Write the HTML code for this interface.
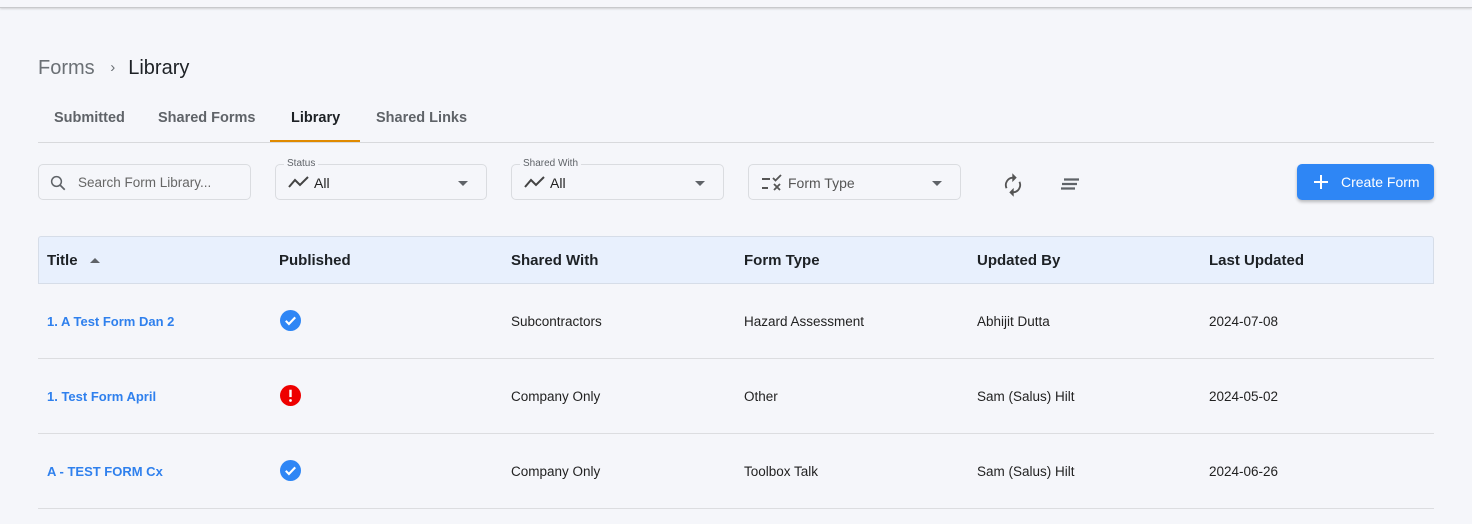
<!DOCTYPE html>
<html><head><meta charset="utf-8"><style>
*{box-sizing:border-box;margin:0;padding:0}
body{width:1472px;height:524px;overflow:hidden;background:#f5f6fa;font-family:"Liberation Sans",sans-serif;position:relative;color:#1f2328}
.top{position:absolute;left:0;top:0;width:1472px;height:8px;background:#f5f6fa;border-bottom:1px solid #c8c9cc;box-shadow:0 1px 2px rgba(0,0,0,.15)}
.abs{position:absolute}
.crumb{left:38px;top:57px;font-size:20px;color:#6b7075}
.crumb b{font-weight:normal;color:#1d2125}
.tab{top:110px;font-size:14.5px;color:#5f6368;font-weight:bold}
.field{position:absolute;top:164px;height:36px;border:1px solid #dadce0;border-radius:5px;background:#f5f6fa}
.lbl{position:absolute;top:-7px;left:8px;font-size:10px;color:#5f6368;background:#f5f6fa;padding:0 3px}
.val{position:absolute;left:38px;top:10px;font-size:14px;color:#222}
.caret{position:absolute;right:18px;top:16px;width:0;height:0;border-left:5px solid transparent;border-right:5px solid transparent;border-top:5px solid #5f6368}
.th{position:absolute;top:252px;font-size:15px;font-weight:bold;color:#1d2125}
.td{position:absolute;font-size:13.5px;color:#222}
.link{color:#2f80ed;font-weight:bold;font-size:13px}
.row{position:absolute;left:38px;width:1396px;height:1px;background:#dcdde0}
</style></head><body>
<div class="top"></div>
<div class="abs crumb">Forms <span style="font-size:15px;margin:0 13px 0 10px;position:relative;top:-2px">&#8250;</span><b>Library</b></div>
<div class="abs tab" style="left:54px">Submitted</div>
<div class="abs tab" style="left:158px">Shared Forms</div>
<div class="abs tab" style="left:291px;color:#1d2125">Library</div>
<div class="abs tab" style="left:376px">Shared Links</div>
<div class="abs" style="left:38px;top:142px;width:1396px;height:1px;background:#d8d9dc"></div>
<div class="abs" style="left:270px;top:140px;width:90px;height:2px;background:#e08a00"></div>

<div class="field" style="left:38px;width:213px">
<svg class="abs" style="left:10px;top:9px" width="18" height="18" viewBox="0 0 24 24"><circle cx="10" cy="10" r="6.5" fill="none" stroke="#5f6368" stroke-width="2"/><path d="M15 15l6 6" stroke="#5f6368" stroke-width="2.2"/></svg>
<div class="val" style="color:#666;font-size:13.5px;left:39px">Search Form Library...</div></div>
<div class="field" style="left:275px;width:212px"><div class="lbl">Status</div>
<svg class="abs" style="left:12px;top:10px" width="22" height="14" viewBox="0 0 22 14"><path d="M1 12l6-7 5 5 8-8" fill="none" stroke="#444" stroke-width="2"/></svg>
<div class="val">All</div><div class="caret"></div></div>
<div class="field" style="left:511px;width:213px"><div class="lbl">Shared With</div>
<svg class="abs" style="left:12px;top:10px" width="22" height="14" viewBox="0 0 22 14"><path d="M1 12l6-7 5 5 8-8" fill="none" stroke="#444" stroke-width="2"/></svg>
<div class="val">All</div><div class="caret"></div></div>
<div class="field" style="left:748px;width:213px">
<svg class="abs" style="left:12px;top:9px" width="22" height="18" viewBox="0 0 22 18"><path d="M1 5h8M1 14h6" stroke="#555" stroke-width="2"/><path d="M12 4l2.5 2.5L20 1M13 10l6 6M19 10l-6 6" fill="none" stroke="#555" stroke-width="1.8"/></svg>
<div class="val" style="color:#555;left:39px">Form Type</div><div class="caret"></div></div>

<svg class="abs" style="left:1002px;top:173px" width="22" height="24" viewBox="0 0 24 24"><path d="M12 4a8 8 0 0 0-7 11.5M12 20a8 8 0 0 0 7-11.5" fill="none" stroke="#555" stroke-width="2"/><path d="M12 1v6l3-3zM12 23v-6l-3 3z" fill="#555" stroke="#555" stroke-width="1.5"/></svg>
<svg class="abs" style="left:1060px;top:178px" width="20" height="14" viewBox="0 0 20 14"><path d="M4 1.5h15M2 6h15M1 10.5h14" stroke="#5f6368" stroke-width="2.2"/></svg>
<div class="abs" style="left:1297px;top:164px;width:137px;height:36px;background:#2e86f5;border-radius:5px;box-shadow:0 2px 3px rgba(0,0,0,.25);color:#fff;font-size:14px">
<svg class="abs" style="left:16px;top:10px" width="16" height="16" viewBox="0 0 16 16"><path d="M8 1v14M1 8h14" stroke="#fff" stroke-width="2"/></svg>
<span class="abs" style="left:44px;top:10px">Create Form</span></div>

<div class="abs" style="left:38px;top:236px;width:1396px;height:48px;background:#e8f0fd;border:1px solid #d6dde8;border-radius:3px 3px 0 0"></div>
<div class="th" style="left:47px">Title</div>
<div class="abs" style="left:90px;top:258px;width:0;height:0;border-left:5px solid transparent;border-right:5px solid transparent;border-bottom:5px solid #5f6368"></div>
<div class="th" style="left:279px">Published</div>
<div class="th" style="left:511px">Shared With</div>
<div class="th" style="left:744px">Form Type</div>
<div class="th" style="left:977px">Updated By</div>
<div class="th" style="left:1209px">Last Updated</div>

<div class="td link" style="left:47px;top:314px">1. A Test Form Dan 2</div>
<svg class="abs" style="left:280px;top:310px" width="21" height="21" viewBox="0 0 20 20"><circle cx="10" cy="10" r="10" fill="#2e86f5"/><path d="M5.5 10.3l3 3 6-6.3" fill="none" stroke="#fff" stroke-width="2"/></svg>
<div class="td" style="left:511px;top:314px">Subcontractors</div>
<div class="td" style="left:744px;top:314px">Hazard Assessment</div>
<div class="td" style="left:977px;top:314px">Abhijit Dutta</div>
<div class="td" style="left:1209px;top:314px">2024-07-08</div>
<div class="row" style="top:358px"></div>

<div class="td link" style="left:47px;top:389px">1. Test Form April</div>
<svg class="abs" style="left:280px;top:385px" width="21" height="21" viewBox="0 0 20 20"><circle cx="10" cy="10" r="10" fill="#e00"/><path d="M10 4.5v7" stroke="#fff" stroke-width="2.3"/><circle cx="10" cy="14.8" r="1.3" fill="#fff"/></svg>
<div class="td" style="left:511px;top:389px">Company Only</div>
<div class="td" style="left:744px;top:389px">Other</div>
<div class="td" style="left:977px;top:389px">Sam (Salus) Hilt</div>
<div class="td" style="left:1209px;top:389px">2024-05-02</div>
<div class="row" style="top:433px"></div>

<div class="td link" style="left:47px;top:464px">A - TEST FORM Cx</div>
<svg class="abs" style="left:280px;top:460px" width="21" height="21" viewBox="0 0 20 20"><circle cx="10" cy="10" r="10" fill="#2e86f5"/><path d="M5.5 10.3l3 3 6-6.3" fill="none" stroke="#fff" stroke-width="2"/></svg>
<div class="td" style="left:511px;top:464px">Company Only</div>
<div class="td" style="left:744px;top:464px">Toolbox Talk</div>
<div class="td" style="left:977px;top:464px">Sam (Salus) Hilt</div>
<div class="td" style="left:1209px;top:464px">2024-06-26</div>
<div class="row" style="top:508px"></div>
</body></html>
